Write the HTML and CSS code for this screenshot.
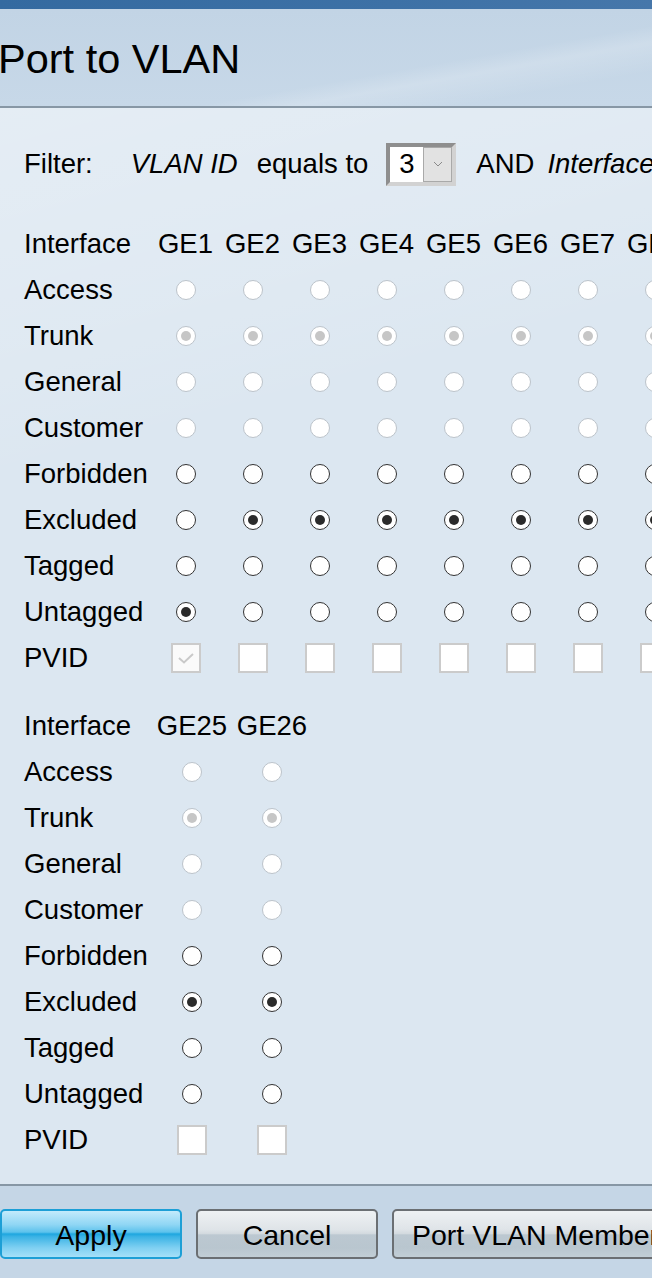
FILE: index.html
```html
<!DOCTYPE html>
<html>
<head>
<meta charset="utf-8">
<title>Port to VLAN</title>
<link rel="stylesheet" href="styles.css">
</head>
<body>
<div class="page">
  <div class="topbar"></div>
  <div class="header"><h1 class="title">Port to VLAN</h1></div>
  <div class="content">
    <div class="filter">
      <span class="f-label">Filter:</span>
      <span class="f-vlan"><i>VLAN ID</i></span>
      <span class="f-eq">equals to</span>
      <span class="sel"><span class="sel-val">3</span><span class="sel-btn"><svg width="10" height="6" viewBox="0 0 10 6"><path d="M1 1 L5 5 L9 1" fill="none" stroke="#8a8a8a" stroke-width="1"/></svg></span></span>
      <span class="f-and">AND</span>
      <span class="f-if"><i>Interface</i></span>
    </div>

    <div class="grid g1">
      <div class="lbl">Interface</div>
      <div class="hd">GE1</div><div class="hd">GE2</div><div class="hd">GE3</div><div class="hd">GE4</div><div class="hd">GE5</div><div class="hd">GE6</div><div class="hd">GE7</div><div class="hd">GE8</div>

      <div class="lbl">Access</div>
      <div class="c"><span class="r dis"></span></div><div class="c"><span class="r dis"></span></div><div class="c"><span class="r dis"></span></div><div class="c"><span class="r dis"></span></div><div class="c"><span class="r dis"></span></div><div class="c"><span class="r dis"></span></div><div class="c"><span class="r dis"></span></div><div class="c"><span class="r dis"></span></div>

      <div class="lbl">Trunk</div>
      <div class="c"><span class="r dis on"></span></div><div class="c"><span class="r dis on"></span></div><div class="c"><span class="r dis on"></span></div><div class="c"><span class="r dis on"></span></div><div class="c"><span class="r dis on"></span></div><div class="c"><span class="r dis on"></span></div><div class="c"><span class="r dis on"></span></div><div class="c"><span class="r dis on"></span></div>

      <div class="lbl">General</div>
      <div class="c"><span class="r dis"></span></div><div class="c"><span class="r dis"></span></div><div class="c"><span class="r dis"></span></div><div class="c"><span class="r dis"></span></div><div class="c"><span class="r dis"></span></div><div class="c"><span class="r dis"></span></div><div class="c"><span class="r dis"></span></div><div class="c"><span class="r dis"></span></div>

      <div class="lbl">Customer</div>
      <div class="c"><span class="r dis"></span></div><div class="c"><span class="r dis"></span></div><div class="c"><span class="r dis"></span></div><div class="c"><span class="r dis"></span></div><div class="c"><span class="r dis"></span></div><div class="c"><span class="r dis"></span></div><div class="c"><span class="r dis"></span></div><div class="c"><span class="r dis"></span></div>

      <div class="lbl">Forbidden</div>
      <div class="c"><span class="r"></span></div><div class="c"><span class="r"></span></div><div class="c"><span class="r"></span></div><div class="c"><span class="r"></span></div><div class="c"><span class="r"></span></div><div class="c"><span class="r"></span></div><div class="c"><span class="r"></span></div><div class="c"><span class="r"></span></div>

      <div class="lbl">Excluded</div>
      <div class="c"><span class="r"></span></div><div class="c"><span class="r on"></span></div><div class="c"><span class="r on"></span></div><div class="c"><span class="r on"></span></div><div class="c"><span class="r on"></span></div><div class="c"><span class="r on"></span></div><div class="c"><span class="r on"></span></div><div class="c"><span class="r on"></span></div>

      <div class="lbl">Tagged</div>
      <div class="c"><span class="r"></span></div><div class="c"><span class="r"></span></div><div class="c"><span class="r"></span></div><div class="c"><span class="r"></span></div><div class="c"><span class="r"></span></div><div class="c"><span class="r"></span></div><div class="c"><span class="r"></span></div><div class="c"><span class="r"></span></div>

      <div class="lbl">Untagged</div>
      <div class="c"><span class="r on"></span></div><div class="c"><span class="r"></span></div><div class="c"><span class="r"></span></div><div class="c"><span class="r"></span></div><div class="c"><span class="r"></span></div><div class="c"><span class="r"></span></div><div class="c"><span class="r"></span></div><div class="c"><span class="r"></span></div>

      <div class="lbl">PVID</div>
      <div class="c"><span class="cb dis"><svg width="20" height="14" viewBox="0 0 20 14"><path d="M3 7 L8 11.5 L17 3" fill="none" stroke="#c9c9c9" stroke-width="2"/></svg></span></div>
      <div class="c"><span class="cb"></span></div><div class="c"><span class="cb"></span></div><div class="c"><span class="cb"></span></div><div class="c"><span class="cb"></span></div><div class="c"><span class="cb"></span></div><div class="c"><span class="cb"></span></div><div class="c"><span class="cb"></span></div>
    </div>

    <div class="grid g2">
      <div class="lbl">Interface</div>
      <div class="hd">GE25</div><div class="hd">GE26</div>

      <div class="lbl">Access</div>
      <div class="c"><span class="r dis"></span></div><div class="c"><span class="r dis"></span></div>

      <div class="lbl">Trunk</div>
      <div class="c"><span class="r dis on"></span></div><div class="c"><span class="r dis on"></span></div>

      <div class="lbl">General</div>
      <div class="c"><span class="r dis"></span></div><div class="c"><span class="r dis"></span></div>

      <div class="lbl">Customer</div>
      <div class="c"><span class="r dis"></span></div><div class="c"><span class="r dis"></span></div>

      <div class="lbl">Forbidden</div>
      <div class="c"><span class="r"></span></div><div class="c"><span class="r"></span></div>

      <div class="lbl">Excluded</div>
      <div class="c"><span class="r on"></span></div><div class="c"><span class="r on"></span></div>

      <div class="lbl">Tagged</div>
      <div class="c"><span class="r"></span></div><div class="c"><span class="r"></span></div>

      <div class="lbl">Untagged</div>
      <div class="c"><span class="r"></span></div><div class="c"><span class="r"></span></div>

      <div class="lbl">PVID</div>
      <div class="c"><span class="cb"></span></div><div class="c"><span class="cb"></span></div>
    </div>
  </div>
  <div class="footer">
    <button class="btn btn-apply">Apply</button>
    <button class="btn btn-gray btn-cancel">Cancel</button>
    <button class="btn btn-gray btn-member">Port VLAN Membership</button>
  </div>
</div>
</body>
</html>
```

FILE: styles.css
```css
html, body {
  margin: 0;
  padding: 0;
  overflow: hidden;
}
body {
  width: 652px;
  height: 1278px;
  font-family: "Liberation Sans", Arial, sans-serif;
  color: #000;
}
.page {
  width: 652px;
  height: 1278px;
  overflow: hidden;
  display: flex;
  flex-direction: column;
  background: #dde7f1;
}
.topbar {
  height: 9px;
  background: linear-gradient(90deg, #346aa0, #3d71a6 60%, #4677aa);
  flex: none;
}
.header {
  height: 97px;
  flex: none;
  display: flex;
  align-items: center;
  background:
    linear-gradient(170deg, rgba(255,255,255,0) 0%, rgba(255,255,255,0) 62%, rgba(255,255,255,0.18) 70%, rgba(255,255,255,0) 84%),
    linear-gradient(180deg, #c2d4e5 0%, #c7d8e8 100%);
  border-bottom: 2px solid #8797a5;
}
.title {
  margin: 0 0 0 -2px;
  font-size: 41.5px;
  font-weight: normal;
  line-height: 1;
  white-space: nowrap;
  padding-top: 2px;
}
.content {
  flex: none;
  height: 1078px;
  box-sizing: border-box;
  padding: 33px 0 0 24px;
  background:
    linear-gradient(165deg, rgba(255,255,255,0.25) 0%, rgba(255,255,255,0.12) 18%, rgba(255,255,255,0) 30%),
    #dce7f1;
  border-bottom: 2px solid #8797a5;
}
.filter {
  display: flex;
  align-items: center;
  height: 46px;
  font-size: 27.5px;
  white-space: nowrap;
}
.filter > span {
  flex: none;
}
.f-vlan { margin-left: 38px; }
.f-eq { margin-left: 19px; }
.sel {
  margin-left: 18px;
  display: flex;
  width: 70px;
  height: 43px;
  box-sizing: border-box;
  border: 4px solid;
  border-color: #8e8e8e #d2d2d2 #d2d2d2 #8e8e8e;
  background: #fff;
}
.sel-val {
  width: 33px;
  display: flex;
  align-items: center;
  justify-content: center;
  font-size: 27.5px;
}
.sel-btn {
  flex: 1;
  box-sizing: border-box;
  background: #e2e2e2;
  border: 1px solid #a9a9a9;
  display: flex;
  align-items: center;
  justify-content: center;
}
.f-and { margin-left: 20px; }
.f-if { margin-left: 13px; }

.grid {
  display: grid;
  grid-auto-rows: 46px;
  font-size: 27.5px;
  white-space: nowrap;
}
.g1 {
  margin-top: 34px;
  grid-template-columns: 128px repeat(8, 67px);
}
.g2 {
  margin-top: 22px;
  grid-template-columns: 128px repeat(2, 80px);
}
.lbl {
  display: flex;
  align-items: center;
}
.hd, .c {
  display: flex;
  align-items: center;
  justify-content: center;
}
.r {
  width: 20px;
  height: 20px;
  box-sizing: border-box;
  border-radius: 50%;
  border: 1px solid #333;
  background: #fff;
  display: flex;
  align-items: center;
  justify-content: center;
}
.r.dis {
  border-color: #bcc3ca;
}
.r.on::after {
  content: "";
  width: 10px;
  height: 10px;
  border-radius: 50%;
  background: #2b2b2b;
}
.r.dis.on::after {
  background: #c6c6c6;
}
.cb {
  width: 30px;
  height: 30px;
  box-sizing: border-box;
  border: 2px solid #cbcbcb;
  background: #fff;
  display: flex;
  align-items: center;
  justify-content: center;
}
.cb.dis {
  background: #fafafa;
}

.footer {
  flex: 1;
  display: flex;
  gap: 14px;
  padding-top: 23px;
  background: #c5d6e6;
}
.btn {
  height: 50px;
  box-sizing: border-box;
  font-family: "Liberation Sans", Arial, sans-serif;
  font-size: 28.5px;
  color: #000;
  border-radius: 5px;
  padding: 2px 0 0;
  white-space: nowrap;
  flex: none;
}
.btn-apply {
  width: 182px;
  border: 2px solid #1d9fd6;
  background: linear-gradient(180deg, #c3ebfb 0%, #8fd6f4 30%, #5cc2ec 46%, #1ea6df 50%, #3bb3e5 56%, #7fd0f2 80%, #a6e0f8 100%);
}
.btn-gray {
  border: 2px solid #6b6f73;
  background: linear-gradient(180deg, #eef1f3 0%, #dfe4e8 40%, #d3dadf 49%, #bcc8d1 52%, #b9c6cf 80%, #c2ced6 100%);
}
.btn-cancel {
  width: 182px;
}
.btn-member {
  padding: 2px 18px 0;
}
```
